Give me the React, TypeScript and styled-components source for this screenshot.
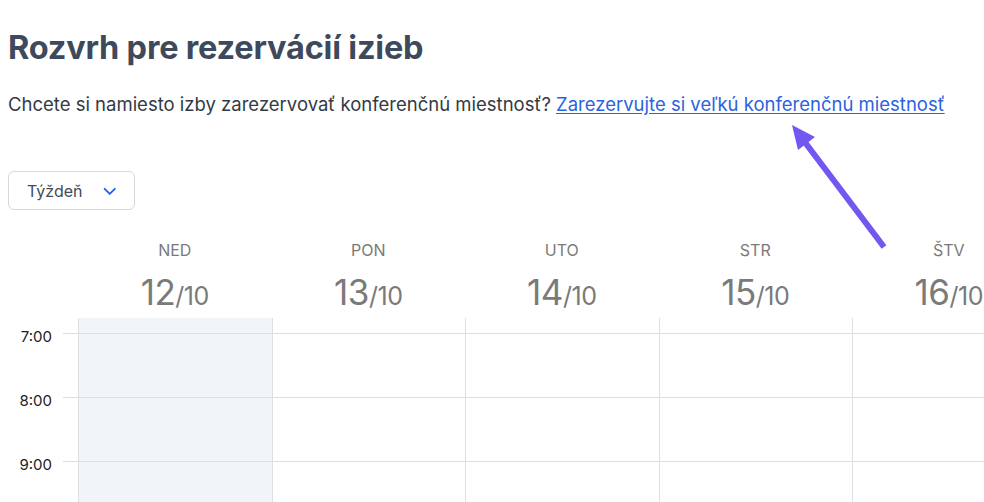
import React from "react";
import styled, { createGlobalStyle } from "styled-components";

const GlobalStyle = createGlobalStyle`
  html, body {
    margin: 0;
    padding: 0;
    background: #ffffff;
    overflow: hidden;
  }
  body {
    font-family: Inter, "Noto Sans", "Liberation Sans", sans-serif;
  }
`;

const Page = styled.div`
  position: relative;
  width: 984px;
  height: 502px;
  overflow: hidden;
  padding: 0 0 0 8px;
  box-sizing: border-box;
`;

const Title = styled.h1`
  margin: 0;
  padding-top: 26px;
  font-size: 32.5px;
  line-height: 44px;
  font-weight: 700;
  color: #3e4a5b;
  letter-spacing: -0.2px;
`;

const Lead = styled.p`
  margin: 22px 0 0;
  font-size: 18.5px;
  line-height: 24px;
  color: #333a44;
  white-space: nowrap;
`;

const Link = styled.a`
  color: #2b63de;
  text-decoration: underline;
  text-underline-offset: 2px;
`;

const Select = styled.button`
  margin-top: 55px;
  display: flex;
  align-items: center;
  gap: 18px;
  width: 127px;
  height: 39px;
  padding: 0 16px 0 18px;
  border: 1px solid #d5d8dd;
  border-radius: 6px;
  background: #fff;
  font-family: inherit;
  font-size: 16px;
  color: #444b56;
  box-sizing: border-box;
`;

const Calendar = styled.div`
  margin-top: 22px;
  margin-left: -8px;
  display: grid;
  grid-template-columns: 78px repeat(5, 193.5px);
`;

const DayHead = styled.div`
  display: flex;
  flex-direction: column;
  align-items: center;
  height: 86px;
  color: #7a7a7a;
`;

const DayName = styled.div`
  font-size: 16px;
  line-height: 20px;
  margin-top: 8px;
`;

const DayDate = styled.div`
  margin-top: 11px;
  font-size: 35px;
  line-height: 42px;
  letter-spacing: -0.5px;
  span {
    font-size: 25px;
  }
`;

const Corner = styled.div``;

const TimeCell = styled.div`
  position: relative;
  height: 64px;
`;

const TimeLabel = styled.div`
  position: absolute;
  right: 26px;
  top: 9px;
  font-size: 15px;
  color: #222;
`;

const TimeRule = styled.div`
  position: absolute;
  left: 63px;
  right: 0;
  top: 15px;
  border-top: 1px solid #dbe0e5;
`;

const Slot = styled.div<{ $shade?: boolean }>`
  height: 64px;
  box-sizing: border-box;
  border-left: 1px solid #dbe0e5;
  background: ${(p) => (p.$shade ? "#f1f4f8" : "#fff")};
  background-image: linear-gradient(#dbe0e5, #dbe0e5);
  background-size: 100% 1px;
  background-position: 0 15px;
  background-repeat: no-repeat;
`;

const Arrow = styled.svg`
  position: absolute;
  left: 780px;
  top: 115px;
  pointer-events: none;
`;

const days = [
  { name: "NED", day: 12 },
  { name: "PON", day: 13 },
  { name: "UTO", day: 14 },
  { name: "STR", day: 15 },
  { name: "ŠTV", day: 16 },
];

const hours = ["7:00", "8:00", "9:00"];

const ChevronDown = () => (
  <svg width="18" height="18" viewBox="0 0 24 24" fill="none" stroke="#2563eb" strokeWidth="2.6" strokeLinecap="round" strokeLinejoin="round">
    <path d="M5 9l7 7 7-7" />
  </svg>
);

export default function App() {
  return (
    <>
      <GlobalStyle />
      <Page>
        <Title>Rozvrh pre rezervácií izieb</Title>
        <Lead>
          Chcete si namiesto izby zarezervovať konferenčnú miestnosť?{" "}
          <Link href="#">Zarezervujte si veľkú konferenčnú miestnosť</Link>
        </Lead>
        <Select>
          Týždeň
          <ChevronDown />
        </Select>
        <Calendar>
          <Corner />
          {days.map((d) => (
            <DayHead key={d.name}>
              <DayName>{d.name}</DayName>
              <DayDate>
                {d.day}
                <span>/10</span>
              </DayDate>
            </DayHead>
          ))}
          {hours.map((h) => (
            <React.Fragment key={h}>
              <TimeCell>
                <TimeLabel>{h}</TimeLabel>
                <TimeRule />
              </TimeCell>
              {days.map((d, i) => (
                <Slot key={d.name} $shade={i === 0} />
              ))}
            </React.Fragment>
          ))}
        </Calendar>
        <Arrow width="120" height="140" viewBox="0 0 120 140">
          <line x1="104" y1="132" x2="24" y2="26" stroke="#7357f0" strokeWidth="6" strokeLinecap="butt" />
          <polygon points="12,10 35,22 18,35" fill="#7357f0" />
        </Arrow>
      </Page>
    </>
  );
}
